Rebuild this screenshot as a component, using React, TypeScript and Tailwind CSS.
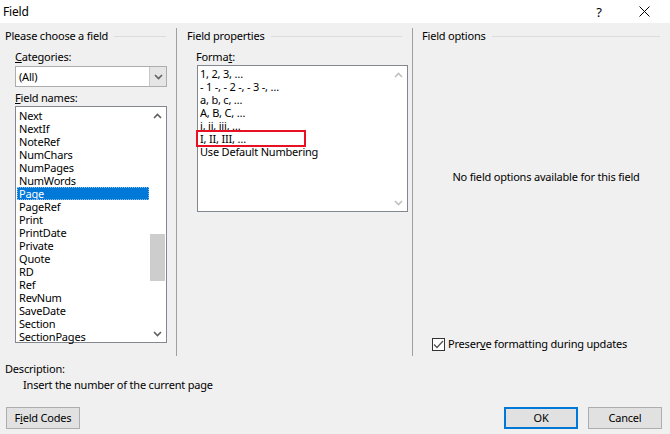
const fieldNames = [
  "Next",
  "NextIf",
  "NoteRef",
  "NumChars",
  "NumPages",
  "NumWords",
  "Page",
  "PageRef",
  "Print",
  "PrintDate",
  "Private",
  "Quote",
  "RD",
  "Ref",
  "RevNum",
  "SaveDate",
  "Section",
  "SectionPages",
];

const formats = [
  "1, 2, 3, …",
  "- 1 -, - 2 -, - 3 -, …",
  "a, b, c, …",
  "A, B, C, …",
  "i, ii, iii, …",
  "I, II, III, …",
  "Use Default Numbering",
];

function Chevron({ up, disabled }: { up?: boolean; disabled?: boolean }) {
  return (
    <svg width="9" height="6" viewBox="0 0 9 6" className={up ? "" : "rotate-180"}>
      <path
        d="M1 5 L4.5 1.5 L8 5"
        fill="none"
        stroke={disabled ? "#c0c0c0" : "#606060"}
        strokeWidth="1.6"
      />
    </svg>
  );
}

function GroupHeader({ title }: { title: string }) {
  return (
    <div className="flex h-4 items-center gap-[6px] pr-[10px]">
      <span>{title}</span>
      <div className="h-px flex-1 bg-[#dcdcdc]" />
    </div>
  );
}

export default function App() {
  return (
    <div className="flex h-[434px] w-[670px] flex-col bg-[#f0f0f0] text-[11px] leading-4 tracking-[-0.2px] text-black [font-family:'Noto_Sans',sans-serif]">
      {/* title bar */}
      <div className="flex h-[23px] items-center bg-white">
        <span className="pl-[3px] text-[12px]">Field</span>
        <span className="ml-auto w-[14px] text-center text-[13px]">?</span>
        <svg width="11" height="11" viewBox="0 0 11 11" className="ml-[33px] mr-[20px]">
          <path d="M0.5 0.5 L10.5 10.5 M10.5 0.5 L0.5 10.5" stroke="#000" strokeWidth="1" />
        </svg>
      </div>

      <div className="mt-[5px] flex h-[328px]">
        {/* left column */}
        <div className="flex w-[177px] flex-col border-r border-[#a0a0a0] pl-[5px]">
          <GroupHeader title="Please choose a field" />
          <div className="mt-[5px] pl-[10px]">
            <u>C</u>ategories:
          </div>
          <div className="mt-[1px] ml-[10px] flex h-[21px] w-[152px] border border-[#adadad] bg-white">
            <span className="flex-1 pl-[3px] leading-[19px]">(All)</span>
            <div className="flex w-[17px] items-center justify-center border-l border-[#c8c8c8] bg-[#e5e5e5]">
              <Chevron />
            </div>
          </div>
          <div className="mt-[3px] pl-[10px]">
            <u>F</u>ield names:
          </div>
          <div className="ml-[10px] flex h-[237px] w-[152px] border border-[#828790] bg-white">
            <div className="flex-1 pt-[2px] pl-px">
              {fieldNames.map((n) => (
                <div
                  key={n}
                  className={
                    "h-[13px] pl-[2px] leading-[13px] " +
                    (n === "Page" ? "bg-[#0078d7] text-white outline-1 outline-dotted outline-[#8cbef0] -outline-offset-1" : "")
                  }
                >
                  {n}
                </div>
              ))}
            </div>
            <div className="flex w-[17px] flex-col items-center bg-white">
              <div className="flex h-[17px] w-full items-center justify-center">
                <Chevron up />
              </div>
              <div className="mt-[110px] h-[47px] w-[15px] bg-[#cdcdcd]" />
              <div className="mt-auto flex h-[17px] w-full items-center justify-center">
                <Chevron />
              </div>
            </div>
          </div>
        </div>

        {/* middle column */}
        <div className="flex w-[236px] flex-col border-r border-[#a0a0a0] pl-[10px]">
          <GroupHeader title="Field properties" />
          <div className="mt-[5px] pl-[9px]">
            Forma<u>t</u>:
          </div>
          <div className="ml-[10px] flex h-[147px] w-[211px] border border-[#828790] bg-white">
            <div className="relative flex-1 pt-[1px] pl-[2px]">
              {formats.map((f) => (
                <div key={f} className="h-[13px] leading-[13px]">
                  {f}
                </div>
              ))}
              <div className="absolute top-[64px] left-[-2px] h-[17px] w-[110px] border-2 border-[#e81123]" />
            </div>
            <div className="flex w-[17px] flex-col items-center">
              <div className="flex h-[17px] w-full items-center justify-center">
                <Chevron up disabled />
              </div>
              <div className="mt-auto flex h-[17px] w-full items-center justify-center">
                <Chevron disabled />
              </div>
            </div>
          </div>
        </div>

        {/* right column */}
        <div className="flex flex-1 flex-col pl-[9px]">
          <GroupHeader title="Field options" />
          <div className="mt-[125px] text-center">No field options available for this field</div>
          <div className="mt-auto mb-[4px] flex items-center gap-[3px] pl-[10px]">
            <div className="flex h-[13px] w-[13px] items-center justify-center border border-[#333] bg-white">
              <svg width="11" height="9" viewBox="0 0 11 9">
                <path d="M1 4.5 L4 7.5 L10 1" fill="none" stroke="#555" strokeWidth="1.3" />
              </svg>
            </div>
            <span>
              Preser<u>v</u>e formatting during updates
            </span>
          </div>
        </div>
      </div>

      <div className="mt-[5px] pl-[5px]">Description:</div>
      <div className="pl-[23px]">Insert the number of the current page</div>

      <div className="mt-[14px] flex items-start px-[6px]">
        <button className="h-[22px] w-[74px] border border-[#adadad] bg-[#e1e1e1]">
          F<u>i</u>eld Codes
        </button>
        <button className="ml-auto h-[22px] w-[74px] border-2 border-[#0078d7] bg-[#e1e1e1]">OK</button>
        <button className="ml-[10px] mr-[2px] h-[22px] w-[74px] border border-[#adadad] bg-[#e1e1e1]">
          Cancel
        </button>
      </div>
    </div>
  );
}
